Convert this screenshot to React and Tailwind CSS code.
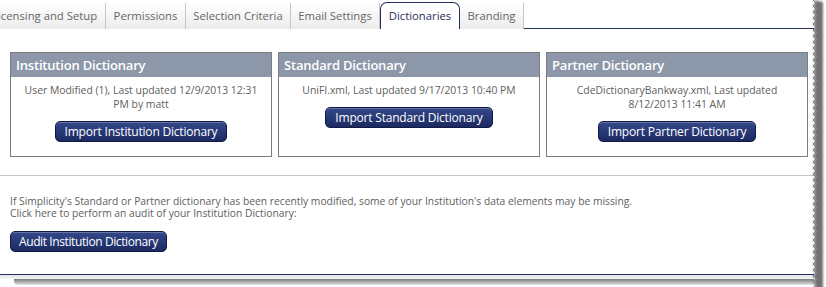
import React from "react";

const tabs = [
  { label: "Licensing and Setup", w: "w-[106px]", first: true },
  { label: "Permissions", w: "w-[80px]" },
  { label: "Selection Criteria", w: "w-[105px]" },
  { label: "Email Settings", w: "w-[89px]" },
  { label: "Dictionaries", w: "w-[80px]", active: true },
  { label: "Branding", w: "w-[64px]" },
];

function Btn({ children, tight }) {
  return (
    <button
      className={`h-[21px] ${tight ? "px-[8px] tracking-[-0.4px]" : "px-[9px] tracking-[-0.2px]"} rounded-[5px] border border-[#101a45] bg-gradient-to-b from-[#34488a] to-[#1c2a62] text-white text-[12px] leading-[19px] shadow-[inset_0_1px_0_rgba(255,255,255,0.25)]`}
    >
      {children}
    </button>
  );
}

function Panel({ title, lines }) {
  return (
    <div className="h-[105px] border border-[#7c7c7c] bg-white">
      <div className="h-[24px] bg-[#8c97a9] text-white text-[13px] font-semibold leading-[24px] pl-[5px] tracking-[-0.2px]">
        {title}
      </div>
      <div className="flex flex-col items-center pt-[6px] text-[10.4px] leading-[14px] text-[#606060]">
        {lines.map((l, i) => (
          <div key={i}>{l}</div>
        ))}
        <div className="mt-[10px]">
          <Btn>{`Import ${title}`}</Btn>
        </div>
      </div>
    </div>
  );
}

function TornEdge() {
  const left = [];
  for (let y = 0; y <= 290; y += 3) {
    const x = (y / 3) % 2 === 0 ? 3 : 6;
    left.push(`${x},${y}`);
  }
  const right = [];
  for (let y = 290; y >= 0; y -= 3) {
    const x = (y / 3) % 2 === 0 ? 10 : 13;
    right.push(`${x},${y}`);
  }
  return (
    <svg width="16" height="287" className="absolute left-[810px] top-0">
      <defs>
        <filter id="b" x="-50%" y="-10%" width="200%" height="120%">
          <feGaussianBlur stdDeviation="0.9" />
        </filter>
      </defs>
      <polygon points={[...left, ...right].join(" ")} fill="#707070" filter="url(#b)" />
      <polyline points={left.join(" ")} fill="none" stroke="#808080" strokeWidth="1" />
    </svg>
  );
}

export default function App() {
  return (
    <div
      className="relative w-[826px] h-[287px] bg-white overflow-hidden"
      style={{ fontFamily: "'Open Sans', 'DejaVu Sans', sans-serif" }}
    >
      <div className="w-[814px]">
        {/* Tabs */}
        <div className="flex items-end h-[29px]">
          {tabs.map((t) =>
            t.active ? (
              <div
                key={t.label}
                className={`${t.w} h-[27px] border border-b-0 border-[#26315f] rounded-t-[7px] bg-white text-[11.3px] text-[#1f2d5c] flex items-center justify-center pt-[1px]`}
              >
                {t.label}
              </div>
            ) : (
              <div
                key={t.label}
                className={`${t.w} h-[26px] border-r border-[#c6c6c6] bg-gradient-to-b from-white to-[#ececec] text-[11.3px] text-[#666] flex items-center overflow-hidden whitespace-nowrap pt-[1px] ${
                  t.first ? "justify-start pl-0" : "justify-center"
                }`}
              >
                <span className={t.first ? "-ml-[8px]" : ""}>{t.label}</span>
              </div>
            )
          )}
          <div className="flex-1 h-[29px] border-b border-[#26315f]" />
        </div>

        {/* Panels */}
        <div className="mt-[23px] ml-[10px] w-[798px] grid grid-cols-3 gap-[6px]">
          <Panel
            title="Institution Dictionary"
            lines={["User Modified (1), Last updated 12/9/2013 12:31", "PM by matt"]}
          />
          <Panel title="Standard Dictionary" lines={["UniFI.xml, Last updated 9/17/2013 10:40 PM"]} />
          <Panel
            title="Partner Dictionary"
            lines={["CdeDictionaryBankway.xml, Last updated", "8/12/2013 11:41 AM"]}
          />
        </div>

        <div className="mt-[18px] h-px bg-[#c4c4c4]" />

        <div className="pl-[10px] pt-[19px] text-[10.3px] leading-[12px] text-[#606060]">
          <div>
            If Simplicity's Standard or Partner dictionary has been recently modified, some of your
            Institution's data elements may be missing.
          </div>
          <div>Click here to perform an audit of your Institution Dictionary:</div>
          <div className="mt-[12px]">
            <Btn tight>Audit Institution Dictionary</Btn>
          </div>
        </div>

        <div className="mt-[22px] h-px bg-[#26315f]" />
        <div className="h-[4px] bg-gradient-to-b from-[#e4e4ec] to-[#f2f2f2]" />
        <div className="ml-[14px] h-[6px] bg-gradient-to-b from-[#7a7a7a] to-[#e6e6e6] rounded-bl-[4px]" />
      </div>
      <TornEdge />
    </div>
  );
}
